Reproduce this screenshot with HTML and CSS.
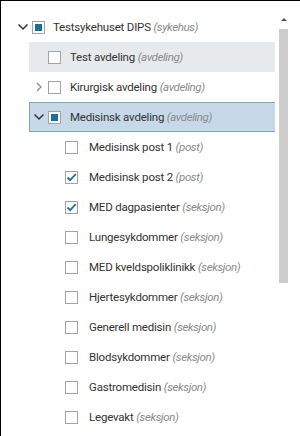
FILE: index.html
```html
<!DOCTYPE html>
<html>
<head>
<meta charset="utf-8">
<link rel="stylesheet" href="styles.css">
</head>
<body>
<div class="frame">
  <div class="tree">
    <div class="row root">
      <span class="chev down"><svg width="12" height="8" viewBox="0 0 12 8"><path d="M1.5 1.5 L6 6 L10.5 1.5" fill="none" stroke="#333" stroke-width="1.5"/></svg></span>
      <span class="cb partial"></span>
      <span class="label">Testsykehuset DIPS <i>(sykehus)</i></span>
    </div>
    <div class="row l1 hover">
      <span class="chev"></span>
      <span class="cb"></span>
      <span class="label">Test avdeling <i>(avdeling)</i></span>
    </div>
    <div class="row l1">
      <span class="chev"><svg width="12" height="10" viewBox="0 0 12 10"><path d="M4 1 L8 5 L4 9" fill="none" stroke="#888" stroke-width="1.2"/></svg></span>
      <span class="cb"></span>
      <span class="label">Kirurgisk avdeling <i>(avdeling)</i></span>
    </div>
    <div class="row l1 selected">
      <span class="chev"><svg width="12" height="8" viewBox="0 0 12 8"><path d="M1.5 1.5 L6 6 L10.5 1.5" fill="none" stroke="#333" stroke-width="1.5"/></svg></span>
      <span class="cb partial"></span>
      <span class="label">Medisinsk avdeling <i>(avdeling)</i></span>
    </div>
    <div class="row l2"><span class="cb"></span><span class="label">Medisinsk post 1 <i>(post)</i></span></div>
    <div class="row l2"><span class="cb checked"><svg width="11" height="11" viewBox="0 0 11 11"><path d="M1.5 5.5 L4.2 8.2 L9.8 2" fill="none" stroke="#1b70a3" stroke-width="1.8"/></svg></span><span class="label">Medisinsk post 2 <i>(post)</i></span></div>
    <div class="row l2"><span class="cb checked"><svg width="11" height="11" viewBox="0 0 11 11"><path d="M1.5 5.5 L4.2 8.2 L9.8 2" fill="none" stroke="#1b70a3" stroke-width="1.8"/></svg></span><span class="label">MED dagpasienter <i>(seksjon)</i></span></div>
    <div class="row l2"><span class="cb"></span><span class="label">Lungesykdommer <i>(seksjon)</i></span></div>
    <div class="row l2"><span class="cb"></span><span class="label">MED kveldspoliklinikk <i>(seksjon)</i></span></div>
    <div class="row l2"><span class="cb"></span><span class="label">Hjertesykdommer <i>(seksjon)</i></span></div>
    <div class="row l2"><span class="cb"></span><span class="label">Generell medisin <i>(seksjon)</i></span></div>
    <div class="row l2"><span class="cb"></span><span class="label">Blodsykdommer <i>(seksjon)</i></span></div>
    <div class="row l2"><span class="cb"></span><span class="label">Gastromedisin <i>(seksjon)</i></span></div>
    <div class="row l2"><span class="cb"></span><span class="label">Legevakt <i>(seksjon)</i></span></div>
  </div>
  <div class="scrollbar">
    <div class="arrow"></div>
    <div class="thumb"></div>
  </div>
</div>
</body>
</html>
```
FILE: styles.css
```css
html, body {
  margin: 0;
  padding: 0;
  background: #fff;
}
.frame {
  width: 299px;
  height: 435px;
  border-top: 1px solid #000;
  border-left: 1px solid #000;
  display: flex;
  overflow: hidden;
  font-family: Roboto, "Open Sans", sans-serif;
  font-size: 11.5px;
  letter-spacing: -0.2px;
  color: #333;
}
.tree {
  width: 274px;
  flex: none;
  padding-top: 11px;
}
.row {
  height: 30px;
  box-sizing: border-box;
  display: flex;
  align-items: center;
  white-space: nowrap;
}
.row i {
  color: #8a8a8a;
  letter-spacing: -0.4px;
}
.root {
  padding-left: 16px;
}
.l1 {
  margin-left: 28px;
  border: 1px solid transparent;
  border-right: none;
  padding-left: 3px;
}
.l1.hover {
  background: #e6eaed;
  border-color: #e6eaed;
}
.l1.selected {
  background: #c7d9e9;
  border-color: #7fa7c0;
}
.l2 {
  margin-left: 28px;
  padding-left: 36px;
}
.chev {
  width: 12px;
  height: 12px;
  display: flex;
  align-items: center;
  justify-content: center;
  margin-right: 3px;
}
.cb {
  width: 13px;
  height: 13px;
  box-sizing: border-box;
  border: 1px solid #a3a3a3;
  background: #fff;
  display: flex;
  align-items: center;
  justify-content: center;
  margin-right: 9px;
  flex: none;
}
.root .cb {
  margin-right: 8px;
}
.l2 .cb {
  margin-right: 11px;
}
.cb.partial::after {
  content: "";
  width: 7px;
  height: 7px;
  background: #1a6fa1;
}
.scrollbar {
  width: 17px;
  flex: none;
  display: flex;
  flex-direction: column;
  align-items: center;
  padding-top: 17px;
}
.arrow {
  width: 0;
  height: 0;
  border-left: 3px solid transparent;
  border-right: 3px solid transparent;
  border-bottom: 3px solid #555;
  margin-bottom: 8px;
}
.thumb {
  width: 9px;
  height: 254px;
  background: #cdcdcd;
}
```
